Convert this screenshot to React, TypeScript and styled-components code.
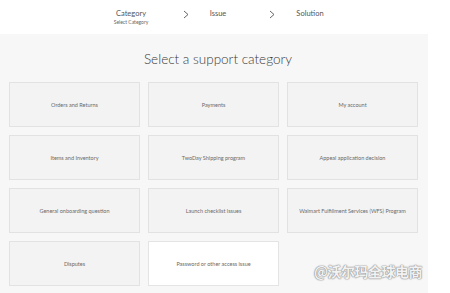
import React from 'react';
import styled, { createGlobalStyle } from 'styled-components';

const GlobalStyle = createGlobalStyle`
  html, body {
    margin: 0;
    padding: 0;
    background: #ffffff;
    font-family: Lato, "Noto Sans", "Liberation Sans", sans-serif;
  }
`;

const Page = styled.div`
  position: relative;
  width: 450px;
  height: 293px;
  overflow: hidden;
  background: #fff;
`;

const Steps = styled.div`
  height: 34px;
  display: flex;
  align-items: flex-start;
  padding-left: 101px;
  box-sizing: border-box;
  padding-top: 8px;
`;

const Step = styled.div<{ $w: number; $ml?: number }>`
  width: ${p => p.$w}px;
  margin-left: ${p => p.$ml ?? 0}px;
  text-align: center;
  color: #555;
  font-size: 7.5px;
  line-height: 11px;
`;

const Sub = styled.div`
  font-size: 5px;
  line-height: 6px;
  color: #666;
`;

const Chevron = styled.svg<{ $ml: number }>`
  margin-left: ${p => p.$ml}px;
  margin-top: 2px;
  flex: none;
`;

const Panel = styled.div`
  width: 428px;
  height: 259px;
  background: #f7f7f7;
  padding-top: 14px;
  box-sizing: border-box;
`;

const Title = styled.h1`
  margin: 0;
  text-align: center;
  font-weight: 300;
  font-size: 13.5px;
  line-height: 22px;
  color: #3a3a3a;
  margin-left: 8px;
`;

const Grid = styled.div`
  margin-top: 12px;
  padding-left: 9px;
  display: grid;
  grid-template-columns: repeat(3, 131px);
  grid-auto-rows: 45px;
  column-gap: 8px;
  row-gap: 8px;
`;

const Card = styled.div<{ $active?: boolean }>`
  box-sizing: border-box;
  border: 1px solid ${p => (p.$active ? '#e4e4e4' : '#e2e2e2')};
  background: ${p => (p.$active ? '#ffffff' : '#f3f3f3')};
  display: flex;
  align-items: center;
  justify-content: center;
  font-size: 5.5px;
  color: #6a6a6a;
  text-align: center;
`;

const Watermark = styled.div`
  position: absolute;
  left: 314px;
  top: 261px;
  font-family: "Noto Sans CJK SC", sans-serif;
  font-size: 14px;
  font-weight: 700;
  letter-spacing: -0.5px;
  color: #f2f2f2;
  text-shadow: 0 0 1px #8a8a8a, 0 0 1px #8a8a8a, 0 0 2px #aaa;
`;

const categories = [
  'Orders and Returns',
  'Payments',
  'My account',
  'Items and Inventory',
  'TwoDay Shipping program',
  'Appeal application decision',
  'General onboarding question',
  'Launch checklist issues',
  'Walmart Fulfillment Services (WFS) Program',
  'Disputes',
  'Password or other access issue',
];

const Arrow = ({ ml }: { ml: number }) => (
  <Chevron $ml={ml} width="6" height="9" viewBox="0 0 6 9">
    <path d="M1 1 L5 4.5 L1 8" stroke="#555" strokeWidth="0.9" fill="none" />
  </Chevron>
);

export default function App() {
  return (
    <Page>
      <GlobalStyle />
      <Steps>
        <Step $w={60}>
          Category
          <Sub>Select Category</Sub>
        </Step>
        <Arrow ml={22} />
        <Step $w={40} $ml={9}>Issue</Step>
        <Arrow ml={31} />
        <Step $w={50} $ml={10}>Solution</Step>
      </Steps>
      <Panel>
        <Title>Select a support category</Title>
        <Grid>
          {categories.map((c, i) => (
            <Card key={c} $active={i === categories.length - 1}>{c}</Card>
          ))}
        </Grid>
      </Panel>
      <Watermark>@沃尔玛全球电商</Watermark>
    </Page>
  );
}
